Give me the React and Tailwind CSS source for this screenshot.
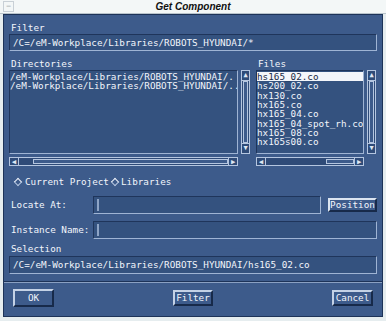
import React from 'react';

const mono = { fontFamily: '"DejaVu Sans Mono", "Liberation Mono", monospace' };

const files = [
  'hs165_02.co',
  'hs200_02.co',
  'hx130.co',
  'hx165.co',
  'hx165_04.co',
  'hx165_04_spot_rh.co',
  'hx165_08.co',
  'hx165s00.co',
];

const dirs = [
  '/eM-Workplace/Libraries/ROBOTS_HYUNDAI/.',
  '/eM-Workplace/Libraries/ROBOTS_HYUNDAI/..',
];

// sunken text field
const Field = ({ className = '', children }) => (
  <div
    className={`flex items-center border border-t-[#1f355b] border-l-[#1f355b] border-b-[#9fb4d4] border-r-[#9fb4d4] bg-[#34527f] pl-[3px] text-[#f2f5fb] whitespace-nowrap overflow-hidden ${className}`}
  >
    {children}
  </div>
);

const Button = ({ className = '', children }) => (
  <div className={`flex items-center justify-center border-2 border-t-[#c4d2e6] border-l-[#c4d2e6] border-b-[#172a4a] border-r-[#172a4a] bg-[#3d5b8b] text-[#f2f5fb] ${className}`}>
    {children}
  </div>
);

const VScroll = () => (
  <div className="flex h-full w-[9px] flex-col border border-[#b5c6e0] bg-[#2f4b78]">
    <div className="h-[10px] border-b border-[#b5c6e0] text-[7px] leading-[9px] text-center text-[#dfe7f3]">▲</div>
    <div className="mx-[1px] flex-1 border border-[#b5c6e0] bg-[#3d5b8b]" />
    <div className="h-[10px] border-t border-[#b5c6e0] text-[7px] leading-[9px] text-center text-[#dfe7f3]">▼</div>
  </div>
);

const HScroll = ({ thumb }) => (
  <div className="flex h-[9px] border border-[#b5c6e0] bg-[#2f4b78]">
    <div className="w-[9px] border-r border-[#b5c6e0] text-[7px] leading-[8px] text-center text-[#dfe7f3]">◀</div>
    <div className="flex-1 flex">
      {thumb === 'left' ? (
        <div className="my-[1px] ml-[14px] flex-1 border border-[#b5c6e0] bg-[#3d5b8b]" />
      ) : (
        <>
          <div className="flex-1" />
          <div className="my-[1px] w-[28px] border border-[#b5c6e0] bg-[#3d5b8b]" />
        </>
      )}
    </div>
    <div className="w-[9px] border-l border-[#b5c6e0] text-[7px] leading-[8px] text-center text-[#dfe7f3]">▶</div>
  </div>
);

const Label = ({ className = '', children }) => (
  <div className={`text-[#f2f5fb] leading-[10px] ${className}`}>{children}</div>
);

const Diamond = () => (
  <span className="mx-[3px] inline-block h-[6px] w-[6px] rotate-45 border border-t-[#eef2fa] border-l-[#eef2fa] border-b-[#b5c6e0] border-r-[#b5c6e0]" />
);

export default function App() {
  return (
    <div className="flex h-[321px] w-[386px] flex-col bg-[#e6edef] text-[9.3px]" style={mono}>
      {/* title bar */}
      <div className="relative flex h-[14px] items-center justify-center border-b border-[#b9c4cc] bg-[#f3f7f7]">
        <div className="absolute left-[3px] top-[1px] h-[11px] w-[11px] border border-[#c8d0d6] text-[7px] leading-[8px] text-center text-[#6a7680]">—</div>
        <span className="text-[10px] font-bold italic text-[#111]" style={{ fontFamily: '"Liberation Sans", Arial, sans-serif' }}>
          Get Component
        </span>
      </div>

      {/* body */}
      <div className="mx-[3px] flex flex-1 flex-col border border-[#1d3358] bg-[#3d5b8b] px-[5px] pt-[8px]">
        <Label className="ml-[2px]">Filter</Label>
        <Field className="mt-[1px] h-[17px] w-[368px]">/C=/eM-Workplace/Libraries/ROBOTS_HYUNDAI/*</Field>

        <div className="mt-[8px] flex">
          {/* directories */}
          <div className="flex w-[241px] flex-col">
            <Label className="ml-[2px]">Directories</Label>
            <div className="mt-[1px] flex h-[84px]">
              <div className="w-[229px] overflow-hidden border border-t-[#1f355b] border-l-[#1f355b] border-b-[#9fb4d4] border-r-[#9fb4d4] bg-[#34527f] pt-[1px]">
                {dirs.map((d) => (
                  <div key={d} className="h-[9.33px] whitespace-nowrap leading-[9.33px] text-[#f2f5fb]">{d}</div>
                ))}
              </div>
              <div className="ml-[3px]">
                <VScroll />
              </div>
            </div>
            <div className="mt-[3px] w-[229px]">
              <HScroll thumb="left" />
            </div>
          </div>

          {/* files */}
          <div className="ml-[6px] flex flex-col">
            <Label className="ml-[2px]">Files</Label>
            <div className="mt-[1px] flex h-[84px]">
              <div className="w-[108px] overflow-hidden border border-t-[#1f355b] border-l-[#1f355b] border-b-[#9fb4d4] border-r-[#9fb4d4] bg-[#34527f] pt-[1px]">
                {files.map((f, i) => (
                  <div
                    key={f}
                    className={`h-[9.33px] whitespace-nowrap leading-[9.33px] ${i === 0 ? 'bg-[#f4f6fa] text-[#1b2a44]' : 'text-[#f2f5fb]'}`}
                  >
                    {f}
                  </div>
                ))}
              </div>
              <div className="ml-[3px]">
                <VScroll />
              </div>
            </div>
            <div className="mt-[3px] w-[108px]">
              <HScroll thumb="right" />
            </div>
          </div>
        </div>

        {/* radio */}
        <div className="ml-[3px] mt-[11px] flex items-center text-[#f2f5fb] leading-[10px]">
          <Diamond />
          <span className="ml-[1px]">Current Project</span>
          <Diamond />
          <span>Libraries</span>
        </div>

        {/* locate at */}
        <div className="mt-[9px] flex items-center">
          <Label className="ml-[2px] w-[82px]">Locate At:</Label>
          <Field className="h-[18px] w-[228px]">
            <span className="h-[12px] w-[2px] bg-[#8ea4c6]" />
          </Field>
          <Button className="ml-[7px] h-[14px] w-[49px] border-t-[#dbe4f0] border-l-[#dbe4f0]">Position</Button>
        </div>

        {/* instance name */}
        <div className="mt-[7px] flex items-center">
          <Label className="ml-[2px] w-[82px]">Instance Name:</Label>
          <Field className="h-[18px] w-[284px]">
            <span className="h-[12px] w-[2px] bg-[#8ea4c6]" />
          </Field>
        </div>

        <Label className="ml-[2px] mt-[5px]">Selection</Label>
        <Field className="mt-[2px] h-[18px] w-[368px]">/C=/eM-Workplace/Libraries/ROBOTS_HYUNDAI/hs165_02.co</Field>

        <div className="mt-[7px] -mx-[5px] border-t border-t-[#1d3358] border-b border-b-[#8aa0c2]" />

        <div className="mt-[6px] flex items-center justify-between px-[4px]">
          <Button className="h-[18px] w-[41px]">OK</Button>
          <Button className="h-[16px] w-[40px]">Filter</Button>
          <Button className="h-[16px] w-[41px]">Cancel</Button>
        </div>
      </div>
      <div className="h-[4px]" />
    </div>
  );
}
